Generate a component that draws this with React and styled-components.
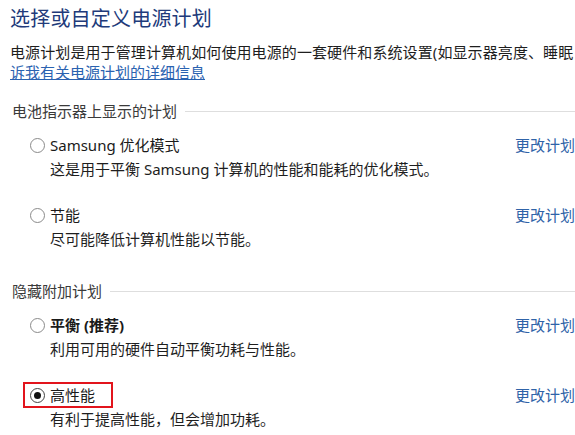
import React from "react";
import styled, { createGlobalStyle } from "styled-components";

const GlobalStyle = createGlobalStyle`
  html, body {
    margin: 0;
    padding: 0;
    background: #ffffff;
    overflow: hidden;
  }
  body {
    font-family: "Noto Sans", "Noto Sans CJK SC", sans-serif;
    -webkit-font-smoothing: antialiased;
  }
`;

const Page = styled.div`
  width: 575px;
  height: 435px;
  overflow: hidden;
  padding: 6px 0 0 10px;
  box-sizing: border-box;
`;

const Content = styled.div`
  width: 565px;
  display: flex;
  flex-direction: column;
`;

const Title = styled.h1`
  margin: 0;
  font-size: 20px;
  font-weight: 400;
  line-height: 26px;
  color: #213a7a;
  letter-spacing: 0.2px;
`;

const Intro = styled.p`
  margin: 11px 0 0;
  font-size: 15px;
  line-height: 18px;
  color: #1e1e1e;
  white-space: nowrap;
  letter-spacing: 0.1px;
`;

const InfoLink = styled.a`
  margin-top: 2px;
  font-size: 15px;
  line-height: 18px;
  color: #2a62b0;
  text-decoration: underline;
  align-self: flex-start;
  cursor: pointer;
`;

const Section = styled.section`
  margin-top: ${props => props.gap}px;
  display: flex;
  flex-direction: column;
`;

const SectionHead = styled.div`
  display: flex;
  align-items: center;
  gap: 8px;
  font-size: 15px;
  line-height: 20px;
  color: #3a3a3a;
  padding-left: 2px;

  &::after {
    content: "";
    flex: 1;
    height: 1px;
    background: #dedede;
  }
`;

const PlanList = styled.div`
  display: flex;
  flex-direction: column;
  gap: 24px;
  padding: 13px 0 0 20px;
`;

const Plan = styled.div`
  display: flex;
  flex-direction: column;
  gap: 2px;
`;

const PlanRow = styled.div`
  display: flex;
  align-items: center;
  justify-content: space-between;
  height: 22px;
`;

const Choice = styled.label`
  display: flex;
  align-items: center;
  gap: 5px;
  font-size: 15px;
  line-height: 22px;
  color: #1a1a1a;
  font-weight: ${props => (props.strong ? 700 : 400)};
  ${props =>
    props.marked &&
    `
    border: 2px solid #e2141c;
    margin: -2px -18px -2px -7px;
    padding: 0 16px 0 5px;
  `}
`;

const Radio = styled.span`
  width: 15px;
  height: 15px;
  border-radius: 50%;
  box-sizing: border-box;
  border: 1px solid ${props => (props.checked ? "#444" : "#8a8a8a")};
  background: #fff;
  display: flex;
  align-items: center;
  justify-content: center;

  &::after {
    content: "";
    width: 7px;
    height: 7px;
    border-radius: 50%;
    background: ${props => (props.checked ? "#111" : "transparent")};
  }
`;

const ChangeLink = styled.a`
  font-size: 15px;
  line-height: 22px;
  color: #2f63a8;
  cursor: pointer;
`;

const PlanNote = styled.div`
  padding-left: 20px;
  font-size: 15px;
  line-height: 22px;
  color: #1e1e1e;
  white-space: nowrap;
`;

const sections = [
  {
    title: "电池指示器上显示的计划",
    gap: 20,
    plans: [
      {
        name: "Samsung 优化模式",
        note: "这是用于平衡 Samsung 计算机的性能和能耗的优化模式。",
      },
      { name: "节能", note: "尽可能降低计算机性能以节能。" },
    ],
  },
  {
    title: "隐藏附加计划",
    gap: 31,
    plans: [
      {
        name: "平衡 (推荐)",
        note: "利用可用的硬件自动平衡功耗与性能。",
        strong: true,
      },
      {
        name: "高性能",
        note: "有利于提高性能，但会增加功耗。",
        checked: true,
      },
    ],
  },
];

const App = () => (
  <>
    <GlobalStyle />
    <Page>
      <Content>
        <Title>选择或自定义电源计划</Title>
        <Intro>
          电源计划是用于管理计算机如何使用电源的一套硬件和系统设置(如显示器亮度、睡眠
        </Intro>
        <InfoLink>诉我有关电源计划的详细信息</InfoLink>
        {sections.map(section => (
          <Section key={section.title} gap={section.gap}>
            <SectionHead>{section.title}</SectionHead>
            <PlanList>
              {section.plans.map(plan => (
                <Plan key={plan.name}>
                  <PlanRow>
                    <Choice strong={plan.strong} marked={plan.checked}>
                      <Radio checked={plan.checked} />
                      {plan.name}
                    </Choice>
                    <ChangeLink>更改计划</ChangeLink>
                  </PlanRow>
                  <PlanNote>{plan.note}</PlanNote>
                </Plan>
              ))}
            </PlanList>
          </Section>
        ))}
      </Content>
    </Page>
  </>
);

export default App;
